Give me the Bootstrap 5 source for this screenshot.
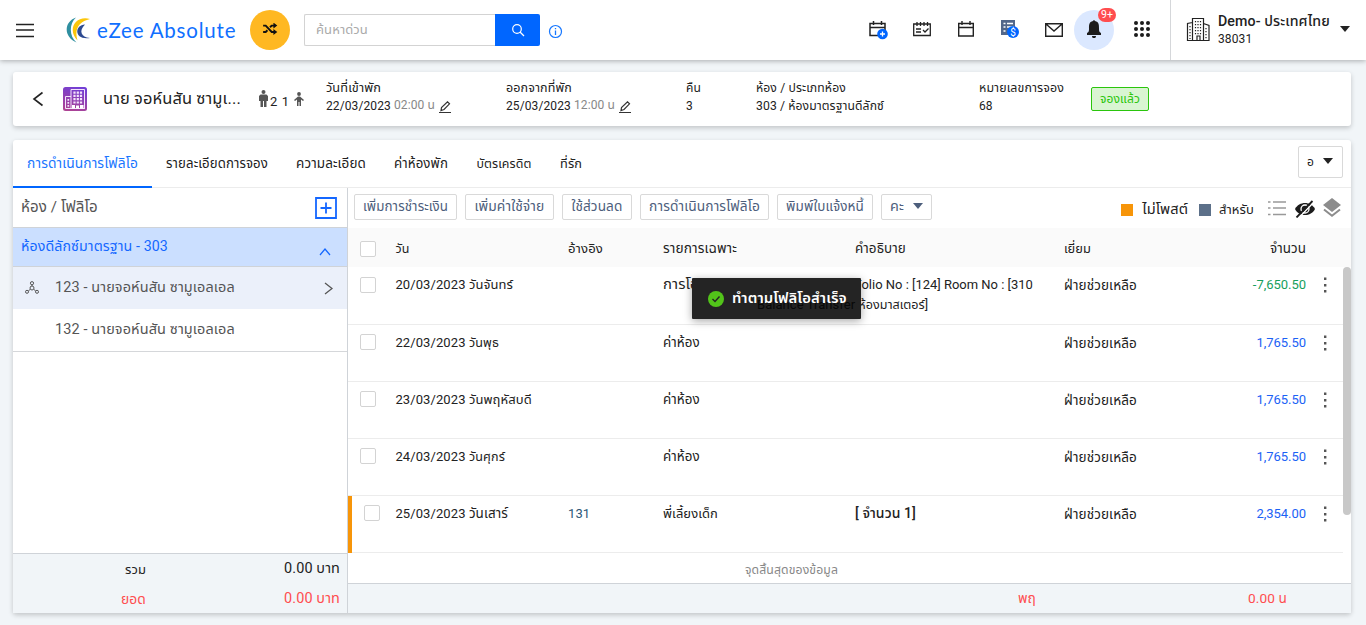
<!DOCTYPE html>
<html lang="th">
<head>
<meta charset="utf-8">
<meta name="viewport" content="width=device-width, initial-scale=1">
<title>eZee Absolute</title>
<link rel="stylesheet" href="https://cdn.jsdelivr.net/npm/bootstrap@5.3.0/dist/css/bootstrap.min.css">
<style>
body{font-family:Roboto,"Noto Sans Thai","Noto Sans",sans-serif;font-size:13px;line-height:20px;color:#222;background:#f1f5f8;height:625px;overflow:hidden;letter-spacing:.1px}
svg{display:block;flex:none}
.topbar{height:60px;background:#fff;box-shadow:0 1px 5px rgba(0,0,0,.3);padding-left:16px;white-space:nowrap}
.brand{font-family:Lato,sans-serif;font-size:20.5px;letter-spacing:.8px;color:#0f6fff;margin-left:6px;width:153px;line-height:30px}
.shuffle{width:40px;height:40px;background:#ffb822}
.search{width:191px;height:32px;border:1px solid #d3d3d3;border-right:0;border-radius:2px 0 0 2px;font-size:12px;color:#aaa;padding:5px 11px}
.go{width:45px;height:32px;background:#06f;border-radius:0 2px 2px 0}
.tools{gap:20px}
.ic{width:24px;height:24px;display:flex;align-items:center;justify-content:center}
.bell{width:40px;height:40px;background:#dbe8ff;margin:0 -4px 0 -12px;position:relative}
.count{position:absolute;left:24px;top:-2px;width:18px;height:14px;border-radius:7px;background:#ff4d4f;color:#fff;font-size:10.5px;line-height:14px;text-align:center;letter-spacing:0}
.hotel{width:196px;height:60px;border-left:1px solid #d5d7da;padding-left:15px}
.panel{background:#fff;margin-left:13px;width:1338px;border-radius:3px;box-shadow:0 2px 5px rgba(0,0,0,.2)}
.guestbar{height:54px;margin-top:12px;white-space:nowrap}
.fact{line-height:18px;font-size:12px;letter-spacing:.1px;margin-top:-5px}
.time{color:#888}
.booked{border:1px solid #2ac50c;background:#d9f5d2;color:#2ac50c;width:58px;height:24px;line-height:22px;border-radius:2px;text-align:center;font-size:12px}
.folio{height:473px;margin-top:14px;white-space:nowrap}
.tabs{height:48px;border-bottom:1px solid #ececec}
.tabs .tab{height:48px;line-height:47px;text-align:center;font-size:12.5px}
.tab.on{width:139px;color:#1976ff;border-bottom:2px solid #06f}
.more{width:45px;height:32px;border:1px solid #d9d9d9;border-radius:2px;margin:6px 8px 0 auto;padding-left:8px;gap:9px;font-size:12px}
.side{width:335px;height:425px;border-right:1px solid #cfd3d8;color:#555;font-size:14px}
.side .hd{height:40px;padding:0 10px 0 8px;border-bottom:1px solid #cfd3d8}
.side .room{height:39px;background:#cbdfff;color:#1467ff;border-bottom:1px solid #cfd3d8;padding:0 16px 0 8px}
.person{height:42px;padding:0 14px 0 42px}
.person.sel{background:#ebf0fa;padding-left:12px}
.sum{height:60px;border-top:1px solid #cfd3d8;background:#f1f5f8;color:#222}
.sum>div{height:30px;padding-right:7px}
.lbl{width:133px;text-align:right}
.danger{color:#ff4d4f}
.bar{height:40px;padding-left:6px}
.act{height:26px;border:1px solid #d9d9d9;border-radius:2px;color:#4d5e7c;text-align:center;line-height:23px;font-size:12.5px;margin:-2px 8px 0 0;flex:none}
.sq{width:12px;height:12px}
.line{display:grid;grid-template-columns:47.4px 172.6px 95px 192px 209px 242px 1fr;height:57px;width:995px;border-bottom:1px solid #ececec;padding-top:8px;position:relative}
.line.top{width:1003px;height:39px;background:#fafafa;border:0;padding-top:11px}
.line>div:nth-child(6){text-align:right}
.tick{width:16px;height:16px;border:1px solid #d3d3d3;border-radius:2px;margin:1px 0 0 12px;background:#fff}
.top .tick,.first .tick{margin-top:2px}
.amt{color:#1b62f5;letter-spacing:-.03px}
.who{padding-top:0}
.who .t{line-height:20px!important}
.dots{width:3px;margin:2px auto 0 18px}
.post::before{content:"";position:absolute;left:0;top:0;width:4px;height:57px;background:#f79509}
.thumb{position:absolute;right:0;top:39px;width:8px;height:248px;border-radius:4px;background:#c8c8c8}
.notice{position:absolute;left:692px;top:278px;width:169px;height:41px;background:#242424;color:#fff;font-weight:500;box-shadow:0 2px 9px rgba(0,0,0,.35);padding-left:16px;gap:8px;white-space:nowrap;border-radius:1px}
.ghost{position:absolute;left:65px;top:17px;color:#080808;font-weight:400;letter-spacing:.05px}
.notice svg,.notice b{position:relative;z-index:1}
.t{display:inline-block;white-space:nowrap}
</style>
<script src="https://cdn.jsdelivr.net/npm/bootstrap@5.3.0/dist/js/bootstrap.bundle.min.js"></script>
</head>
<body>
<header class="topbar d-flex align-items-center">
  <svg width="18" height="16" stroke="#222" stroke-width="1.4"><path d="M0 2.500h18M0 8h18M0 14.500h18"/></svg>
  <svg style="margin-left:31px" width="26" height="26" viewBox="0 0 26 26"><path d="M11 .5C-1.500 5-1.500 20 11.500 25.500 4 19 4 7 11 .5Z" fill="#2f8fa0"/><path d="M25 2C10-2 2 13 12.500 23.500 9 12 14 4.500 25 2Z" fill="#fcc60a"/><path d="M20 7.500C9 8 9 23.500 25 21 16 20 13.500 14 20 7.500Z" fill="#2d4a91"/></svg>
  <div class="brand">eZee Absolute</div>
  <div class="shuffle rounded-circle d-flex align-items-center justify-content-center"><svg style="margin-top:-3px" width="16" height="12" viewBox="0 0 18 14" fill="none" stroke="#111" stroke-width="2.200"><path d="M1 3h3l7 7.500h4M1 10.500h3l2-2M9 5l2-2h4"/><path d="M13-.5l4.500 3.500-4.500 3.500zM13 7l4.500 3.500-4.500 3.500z" fill="#111" stroke="none"/></svg></div>
  <div class="search" style="margin-left:14px"><span class="t" data-w="52">ค้นหาด่วน</span></div>
  <div class="go d-flex align-items-center justify-content-center"><svg width="14" height="14" fill="none" stroke="#fff" stroke-width="1.2"><circle cx="6" cy="6" r="4.300"/><path d="M9 9l4 4"/></svg></div>
  <svg class="ms-2" style="margin-top:3px" width="15" height="15" fill="none" stroke="#1677ff" stroke-width="1.200"><circle cx="7.500" cy="7.500" r="6"/><path d="M7.500 6.500v4.500M7.500 4v1.200" stroke-width="1.300"/></svg>
  <div class="tools d-flex align-items-center ms-auto" style="margin-right:16px">
    <div class="ic"><svg width="20" height="20" viewBox="0 0 20 20" fill="none" stroke="#222" stroke-width="1.500"><path d="M17 10V3.500H2v12h9M2 7.500h15M5.500 1v4M13.500 1v4"/><circle cx="14.500" cy="14" r="5.300" fill="#06f" stroke="none"/><path d="M12 14h5M14.500 11.500v5" stroke="#fff" stroke-width="1.300"/></svg></div>
    <div class="ic"><svg style="margin-top:-2px" width="18" height="16" viewBox="0 0 18 16" fill="none" stroke="#222" stroke-width="1.300"><path d="M.7 3h16.600v11.500H.7zM4 1v4M7.500 1v4M11 1v4M14.500 1v4M3 8h5M3 11h5M10 9l2 2 3.500-3.500"/></svg></div>
    <div class="ic"><svg style="margin-top:-3px" width="16" height="17" viewBox="0 0 16 17" fill="none" stroke="#222" stroke-width="1.400"><path d="M.7 3.500h14.600v12.500H.7zM.7 7.500h14.600M4 1v4M12 1v4"/></svg></div>
    <div class="ic"><svg style="margin-top:-3px" width="18" height="19" viewBox="0 0 18 19"><path d="M0 1h14v15H0z" fill="#53678a"/><path d="M2.500 4.500h2M6 4.500h6M2.500 8h2M6 8h6M2.500 12h2" stroke="#fff" stroke-width="1.400"/><circle cx="12" cy="13" r="6" fill="#06f"/><text x="12" y="16.500" text-anchor="middle" font-size="10" fill="#fff">$</text></svg></div>
    <div class="ic"><svg width="18" height="14" viewBox="0 0 18 14" fill="none" stroke="#222" stroke-width="1.400"><path d="M.7.700h16.600v12.600H.7zM1 1l8 7 8-7"/></svg></div>
    <div class="bell rounded-circle d-flex align-items-center justify-content-center"><svg style="margin-top:-3px" width="14" height="18" viewBox="0 0 14 18" fill="#1c1c1c"><path d="M6 1c0-1 2-1 2 0 4 1 4 4 4 7 0 3 0 4 2 5v2H0v-2c2-1 2-2 2-5 0-3 0-6 4-7zM5 16h4c0 3-4 3-4 0z"/></svg><span class="count">9+</span></div>
    <div class="ic"><svg style="margin-top:-2px" width="16" height="16" fill="#1c1c1c"><g id="r"><circle cx="2" cy="2" r="2"/><circle cx="8" cy="2" r="2"/><circle cx="14" cy="2" r="2"/></g><use href="#r" y="6"/><use href="#r" y="12"/></svg></div>
  </div>
  <div class="hotel d-flex align-items-center">
    <svg style="margin-top:-3px" width="24" height="26" viewBox="0 0 24 26" fill="none" stroke="#222" stroke-width="1.200"><path d="M6.500 24.500V2.500h11v22M6.500 6.500l-5 1v17h21.500v-15l-5.500-2M11 24v-4h3v4"/><path d="M9.500 5v14M12 5v14M14.500 5v14M4 10v13M20 12v11" stroke-dasharray="1.300 1.700"/></svg>
    <div style="margin-left:8px;width:113px;line-height:17px;font-size:12.500px"><b class="t" data-w="112" style="font-weight:500">Demo- ประเทศไทย</b><br><span style="font-size:12px">38031</span></div>
    <svg style="margin-left:9px;margin-top:-2px" width="10" height="6"><path d="M0 0h10L5 6z" fill="#222"/></svg>
  </div>
</header>

<section class="panel guestbar d-flex align-items-center">
  <svg style="margin-left:19px" width="12" height="16" fill="none" stroke="#222" stroke-width="1.600"><path d="M10.500 1.500L2 8l8.500 6.500"/></svg>
  <svg style="margin-left:19px" width="24" height="24" viewBox="0 0 24 24"><defs><linearGradient id="g" x1=".6" x2=".3" y2="1"><stop stop-color="#733fd5"/><stop offset="1" stop-color="#ad4393"/></linearGradient></defs><rect width="24" height="24" rx="2.500" fill="url(#g)"/><g fill="none" stroke="#f3e4fb" stroke-width="1"><path d="M8 21.500V2.500h13.500v19M8 9.500H2.500v12h19.500"/><path d="M11.500 4.500v12M14.800 4.500v12M18 4.500v12" stroke-width="2.200" stroke-dasharray="2.200 1.100"/><path d="M5.300 12v8" stroke-width="1.700" stroke-dasharray="1.700 1.300"/></g><path d="M9 18h3v3.500H9zM13 18.500h3v3h-3zM17 18h3.500v3.500H17z" fill="#fff"/></svg>
  <div style="margin-left:16px;width:156px;font-size:16px"><span class="t" data-w="138">นาย จอห์นสัน ซามูเ...</span></div>
  <svg style="margin-top:-2px" width="9" height="17" viewBox="0 0 9 17" fill="#555"><circle cx="4.500" cy="2" r="2"/><path d="M1.500 4.500h6L9 6v5H7.500V7v10H5v-6H4v6H1.500V7v4H0V6z"/></svg>
  <div style="margin-left:2px;width:24px;margin-top:6px;font-size:13px;word-spacing:1px">2 1</div>
  <svg width="10" height="14" viewBox="0 0 10 14" fill="#555"><circle cx="5" cy="2" r="1.900"/><path d="M4 4.500h2l4 3.500-1 1-2-1.500V14H5.500v-4h-1v4H3V7.500L1 9 0 8z"/></svg>
  <div class="fact" style="width:180px;margin-left:22px"><span class="t" data-w="55">วันที่เข้าพัก</span><div class="d-flex align-items-center">22/03/2023&nbsp;<span class="time t" data-w="41">02:00 น</span><svg style="margin:2px 0 0 4px" width="12" height="12" fill="none" stroke="#333" stroke-width="1.200"><path d="M2 9.500l.5-3L8.500.800l2 2L5 8.500zM0 11.500h12"/></svg></div></div>
  <div class="fact" style="width:180px"><span class="t" data-w="66">ออกจากที่พัก</span><div class="d-flex align-items-center">25/03/2023&nbsp;<span class="time t" data-w="41">12:00 น</span><svg style="margin:2px 0 0 4px" width="12" height="12" fill="none" stroke="#333" stroke-width="1.200"><path d="M2 9.500l.5-3L8.500.800l2 2L5 8.500zM0 11.500h12"/></svg></div></div>
  <div class="fact" style="width:70px"><span class="t" data-w="15">คืน</span><br>3</div>
  <div class="fact" style="width:223px"><span class="t" data-w="90">ห้อง / ประเภทห้อง</span><br><span class="t" data-w="128">303 / ห้องมาตรฐานดีลักซ์</span></div>
  <div class="fact" style="width:112px"><span class="t" data-w="85">หมายเลขการจอง</span><br>68</div>
  <div class="booked"><span class="t" data-w="40">จองแล้ว</span></div>
</section>

<main class="panel folio">
  <div class="tabs d-flex">
    <div class="tab on"><span class="t" data-w="111">การดำเนินการโฟลิโอ</span></div>
    <div class="tab" style="width:130px"><span class="t" data-w="102">รายละเอียดการจอง</span></div>
    <div class="tab" style="width:98px"><span class="t" data-w="70">ความละเอียด</span></div>
    <div class="tab" style="width:82px"><span class="t" data-w="54">ค่าห้องพัก</span></div>
    <div class="tab" style="width:84px"><span class="t" data-w="55">บัตรเครดิต</span></div>
    <div class="tab" style="width:50px"><span class="t" data-w="22">ที่รัก</span></div>
    <div class="more d-flex align-items-center"><span class="t" data-w="7">อ</span><svg style="margin-top:-3px" width="10" height="6"><path d="M0 0h10L5 6z" fill="#222"/></svg></div>
  </div>
  <div class="d-flex">
    <aside class="side d-flex flex-column">
      <div class="hd d-flex align-items-center justify-content-between"><span class="t" data-w="77">ห้อง / โฟลิโอ</span><svg width="22" height="22" fill="none" stroke="#1467ff" stroke-width="1.800"><path d="M1 1h20v20H1zM5.500 11h11M11 5.500v11"/></svg></div>
      <div class="room d-flex align-items-center justify-content-between"><span class="t" style="margin-top:-2px" data-w="147">ห้องดีลักซ์มาตรฐาน - 303</span><svg style="margin-top:8px" width="12" height="9" fill="none" stroke="#1467ff" stroke-width="1.200"><path d="M1 8l5-6 5 6"/></svg></div>
      <div class="person sel d-flex align-items-center"><svg style="margin-top:-2px" width="14" height="13" fill="none" stroke="#555"><circle cx="7" cy="2.200" r="1.600"/><circle cx="7" cy="7" r="2"/><circle cx="2" cy="10.800" r="1.500"/><circle cx="12" cy="10.800" r="1.500"/><path d="M7 4v1M5 8.500L3.300 10M9 8.500l1.700 1.500"/></svg><span class="t" style="margin-left:16px" data-w="180">123 - นายจอห์นสัน ซามูเอลเอล</span><svg class="ms-auto" width="9" height="13" fill="none" stroke="#555" stroke-width="1.300"><path d="M1 1l7 5.500L1 12"/></svg></div>
      <div class="person d-flex align-items-center" style="height:43px;border-bottom:1px solid #d5d7da"><span class="t" data-w="180">132 - นายจอห์นสัน ซามูเอลเอล</span></div>
      <div class="sum mt-auto"><div class="d-flex align-items-center justify-content-between"><div class="lbl"><span class="t" data-w="21">รวม</span></div><span class="t" data-w="56">0.00 บาท</span></div><div class="danger d-flex align-items-center justify-content-between"><div class="lbl"><span class="t" data-w="25">ยอด</span></div><span class="t" data-w="56">0.00 บาท</span></div></div>
    </aside>
    <section class="d-flex flex-column position-relative" style="width:1003px;height:425px">
      <div class="bar d-flex align-items-center">
        <div class="act" style="width:103px"><span class="t" data-w="85">เพิ่มการชำระเงิน</span></div>
        <div class="act" style="width:89px"><span class="t" data-w="70">เพิ่มค่าใช้จ่าย</span></div>
        <div class="act" style="width:70px"><span class="t" data-w="51">ใช้ส่วนลด</span></div>
        <div class="act" style="width:129px"><span class="t" data-w="111">การดำเนินการโฟลิโอ</span></div>
        <div class="act" style="width:96px"><span class="t" data-w="78">พิมพ์ใบแจ้งหนี้</span></div>
        <div class="act d-flex align-items-center" style="width:51px;padding-left:8px;gap:9px"><span class="t" data-w="14">คะ</span><svg style="margin-top:-3px" width="10" height="6"><path d="M0 0h10L5 6z" fill="#4d5e7c"/></svg></div>
        <div class="d-flex align-items-center ms-auto" style="padding-right:10px;padding-top:3px;font-size:12px"><i class="sq" style="background:#f79509"></i><span class="t" style="margin:0 11px 0 9px" data-w="46">ไม่โพสต์</span><i class="sq" style="background:#5c7089"></i><span class="t" style="margin:0 14px 0 8px" data-w="35">สำหรับ</span>
        <svg style="margin-top:-3px" width="18" height="16" stroke="#999" stroke-width="1.500"><path d="M0 2h2.500M5 2h13M0 8h2.500M5 8h13M0 14.500h2.500M5 14.500h13"/></svg>
        <svg style="margin:-2px 8px 0 9px" width="20" height="18" viewBox="0 0 20 18"><path d="M0 9C4 1 16 1 20 9 16 17 4 17 0 9Z" fill="#1c1c1c"/><circle cx="10" cy="9" r="4" fill="none" stroke="#fff" stroke-width="1.300"/><path d="M3.500 18L19 2" stroke="#fff" stroke-width="1.500"/><path d="M1.500 17.500L17.500 1" stroke="#1c1c1c" stroke-width="1.800"/></svg>
        <svg style="margin-top:-3px" width="18" height="20" viewBox="0 0 18 20"><path d="M9 0l9 7-9 7-9-7z" fill="#8c8c8c"/><path d="M1 11.500l8 6.300 8-6.300" fill="none" stroke="#8c8c8c" stroke-width="2"/></svg></div>
      </div>
      <div class="position-relative">
      <div class="line top"><div><div class="tick"></div></div><div><span class="t" data-w="14">วัน</span></div><div><span class="t" data-w="35">อ้างอิง</span></div><div><span class="t" data-w="74">รายการเฉพาะ</span></div><div><span class="t" data-w="51">คำอธิบาย</span></div><div style="display:grid;grid-template-columns:1fr 1fr"><span class="text-start"><span class="t" data-w="27">เยี่ยม</span></span><span><span class="t" data-w="36">จำนวน</span></span></div></div>
      <div class="line first" style="height:58px"><div><div class="tick"></div></div><div>20/03/2023 <span class="t" data-w="44">วันจันทร์</span></div><div></div><div><span class="t" data-w="45">การโอน</span></div><div style="line-height:20px;letter-spacing:0;margin-left:-4px"><span class="t" data-w="182">[Folio No : [124] Room No : [310</span><br><span class="t" style="margin-left:4px" data-w="73">[ห้องมาสเตอร์]</span></div><div class="who d-flex justify-content-between"><span class="t" data-w="73">ฝ่ายช่วยเหลือ</span><span class="amt" style="color:#16a05d">-7,650.50</span></div><div><svg class="dots" width="3" height="16" fill="#555"><path d="M0 .5h2.400v2.400H0zM0 7h2.400v2.400H0zM0 13h2.400v2.400H0z"/></svg></div></div>
      <div class="line"><div><div class="tick"></div></div><div>22/03/2023 <span class="t" data-w="30">วันพุธ</span></div><div></div><div><span class="t" data-w="37">ค่าห้อง</span></div><div></div><div class="who d-flex justify-content-between"><span class="t" data-w="73">ฝ่ายช่วยเหลือ</span><span class="amt">1,765.50</span></div><div><svg class="dots" width="3" height="16" fill="#555"><path d="M0 .5h2.400v2.400H0zM0 7h2.400v2.400H0zM0 13h2.400v2.400H0z"/></svg></div></div>
      <div class="line"><div><div class="tick"></div></div><div>23/03/2023 <span class="t" data-w="63">วันพฤหัสบดี</span></div><div></div><div><span class="t" data-w="37">ค่าห้อง</span></div><div></div><div class="who d-flex justify-content-between"><span class="t" data-w="73">ฝ่ายช่วยเหลือ</span><span class="amt">1,765.50</span></div><div><svg class="dots" width="3" height="16" fill="#555"><path d="M0 .5h2.400v2.400H0zM0 7h2.400v2.400H0zM0 13h2.400v2.400H0z"/></svg></div></div>
      <div class="line"><div><div class="tick"></div></div><div>24/03/2023 <span class="t" data-w="36">วันศุกร์</span></div><div></div><div><span class="t" data-w="37">ค่าห้อง</span></div><div></div><div class="who d-flex justify-content-between"><span class="t" data-w="73">ฝ่ายช่วยเหลือ</span><span class="amt">1,765.50</span></div><div><svg class="dots" width="3" height="16" fill="#555"><path d="M0 .5h2.400v2.400H0zM0 7h2.400v2.400H0zM0 13h2.400v2.400H0z"/></svg></div></div>
      <div class="line post"><div><div class="tick" style="margin-left:16px"></div></div><div>25/03/2023 <span class="t" data-w="39">วันเสาร์</span></div><div style="color:#2c5777">131</div><div><span class="t" data-w="55">พี่เลี้ยงเด็ก</span></div><div><span class="t" style="font-weight:500" data-w="61">[ จำนวน 1]</span></div><div class="who d-flex justify-content-between"><span class="t" data-w="73">ฝ่ายช่วยเหลือ</span><span class="amt">2,354.00</span></div><div><svg class="dots" width="3" height="16" fill="#555"><path d="M0 .5h2.400v2.400H0zM0 7h2.400v2.400H0zM0 13h2.400v2.400H0z"/></svg></div></div>
      <div class="thumb"></div>
      </div>
      <div style="padding:7px 0 0 397px;color:#888;font-size:12px"><span class="t" data-w="93">จุดสิ้นสุดของข้อมูล</span></div>
      <div class="danger mt-auto d-flex align-items-center justify-content-between" style="height:30px;border-top:1px solid #cfd3d8;background:#f1f5f8;padding:0 64px 0 670px"><span class="t" data-w="18">พฤ</span><span class="t" data-w="39">0.00 น</span></div>
    </section>
  </div>
</main>
<div class="notice d-flex align-items-center"><span class="ghost">Balance Transfer</span><svg width="16" height="16"><circle cx="8" cy="8" r="8" fill="#52c41a"/><path d="M4.500 8l2.500 2.500 4.500-5" fill="none" stroke="#242424" stroke-width="1.400"/></svg><b class="t" data-w="115" style="font-weight:600">ทำตามโฟลิโอสำเร็จ</b></div>
<script>
document.querySelectorAll('.t[data-w]').forEach(function(e){
  var w=e.getBoundingClientRect().width,s=parseFloat(getComputedStyle(e).fontSize);
  var f=Math.max(.8,Math.min(1.25,e.dataset.w/w));
  e.style.fontSize=(s*f).toFixed(2)+'px';e.style.lineHeight='1';
  var r=e.dataset.w-e.getBoundingClientRect().width,n=e.textContent.replace(/[\u0e31\u0e34-\u0e3a\u0e47-\u0e4e]/g,'').length;
  if(Math.abs(r)>1)e.style.letterSpacing=(r/n).toFixed(2)+'px';
});
</script>
</body>
</html>
